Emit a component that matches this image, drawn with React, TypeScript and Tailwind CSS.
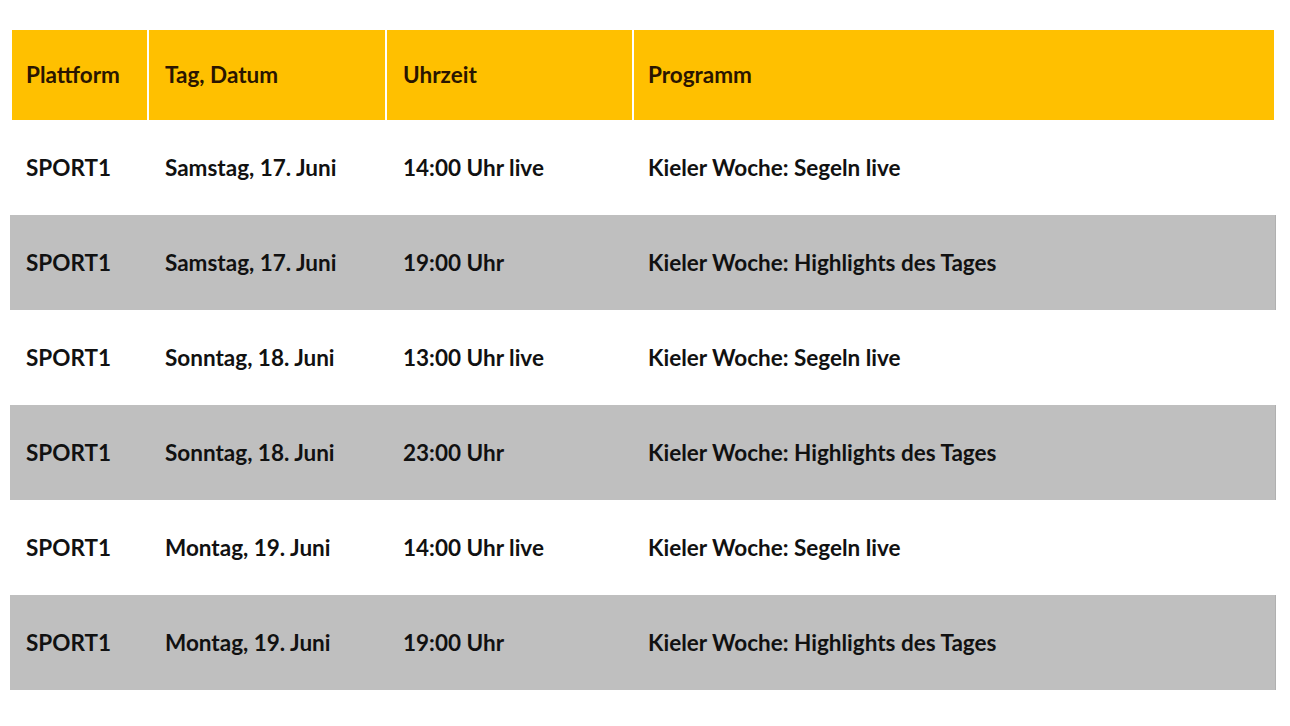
import React from 'react';

const rows = [
  { p: 'SPORT1', d: 'Samstag, 17. Juni', t: '14:00 Uhr live', s: 'Kieler Woche: Segeln live' },
  { p: 'SPORT1', d: 'Samstag, 17. Juni', t: '19:00 Uhr', s: 'Kieler Woche: Highlights des Tages' },
  { p: 'SPORT1', d: 'Sonntag, 18. Juni', t: '13:00 Uhr live', s: 'Kieler Woche: Segeln live' },
  { p: 'SPORT1', d: 'Sonntag, 18. Juni', t: '23:00 Uhr', s: 'Kieler Woche: Highlights des Tages' },
  { p: 'SPORT1', d: 'Montag, 19. Juni', t: '14:00 Uhr live', s: 'Kieler Woche: Segeln live' },
  { p: 'SPORT1', d: 'Montag, 19. Juni', t: '19:00 Uhr', s: 'Kieler Woche: Highlights des Tages' },
];

const cols = 'grid grid-cols-[135px_236px_245px_1fr] gap-x-[2px]';

export default function App() {
  return (
    <div className="w-[1290px] h-[726px] bg-white pt-[30px] pl-[10px] pr-[14px] font-['Lato',sans-serif] font-bold text-[22.5px] text-[#111]">
      <div className={`${cols} mx-[2px] h-[90px] text-[#2a1500]`}>
        <div className="bg-[#FFC000] flex items-center pl-[14px]">Plattform</div>
        <div className="bg-[#FFC000] flex items-center pl-[16px]">Tag, Datum</div>
        <div className="bg-[#FFC000] flex items-center pl-[16px]">Uhrzeit</div>
        <div className="bg-[#FFC000] flex items-center pl-[14px]">Programm</div>
      </div>
      {rows.map((r, i) => (
        <div key={i} className={i % 2 === 1 ? 'bg-[#BFBFBF] h-[95px] border-r border-[#b0b0b0]' : 'bg-white h-[95px]'}>
          <div className={`${cols} mx-[2px] h-full`}>
            <div className="flex items-center pl-[14px]">{r.p}</div>
            <div className="flex items-center pl-[16px]">{r.d}</div>
            <div className="flex items-center pl-[16px]">{r.t}</div>
            <div className="flex items-center pl-[14px]">{r.s}</div>
          </div>
        </div>
      ))}
    </div>
  );
}
